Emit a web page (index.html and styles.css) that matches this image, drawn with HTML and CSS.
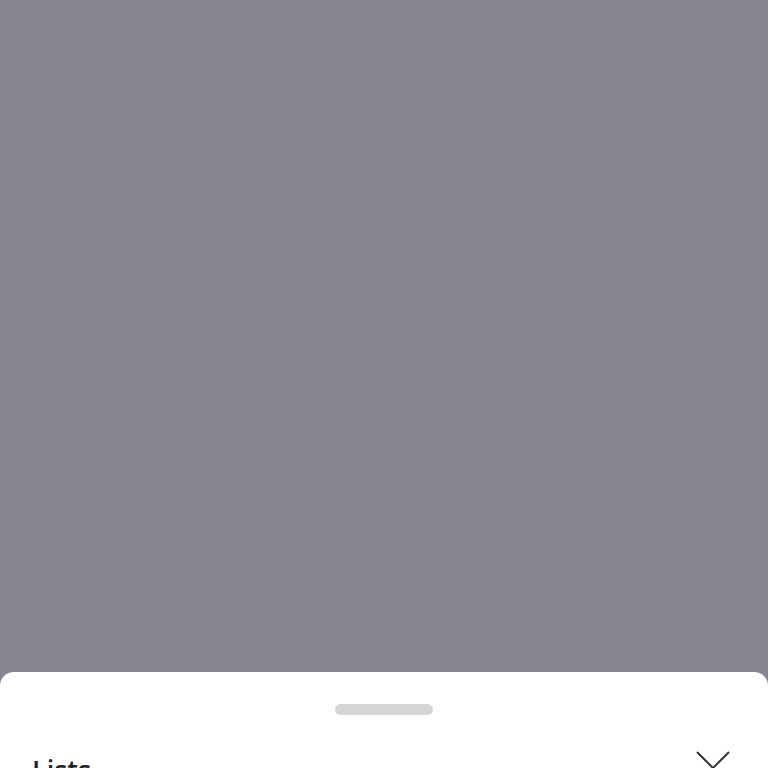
FILE: index.html
```html
<!DOCTYPE html>
<html>
<head>
<meta charset="utf-8">
<link rel="stylesheet" href="styles.css">
</head>
<body>
<div class="backdrop"></div>
<div class="sheet">
  <div class="handle"></div>
  <div class="header">
    <h2 class="title">Lists</h2>
    <button class="close" aria-label="Close">
      <svg width="34" height="34" viewBox="0 0 34 34"><path d="M1 1 L33 33 M33 1 L1 33" stroke="#333" stroke-width="2" fill="none"/></svg>
    </button>
  </div>
</div>
</body>
</html>
```
FILE: styles.css
```css
html, body { margin: 0; padding: 0; height: 100%; overflow: hidden; }
body {
  background: #85848f;
  font-family: "Open Sans", "Liberation Sans", sans-serif;
  display: flex;
  flex-direction: column;
}
.backdrop { height: 672px; flex: none; }
.sheet {
  flex: 1;
  background: #fff;
  border-radius: 14px 14px 0 0;
  display: flex;
  flex-direction: column;
  padding: 32px 32px 0 32px;
}
.handle {
  align-self: center;
  width: 98px;
  height: 11px;
  border-radius: 6px;
  background: #d6d6d6;
}
.header {
  display: flex;
  justify-content: space-between;
  align-items: flex-start;
  margin-top: 36px;
}
.title {
  margin: 0;
  font-size: 27px;
  font-weight: 600;
  color: #222;
  line-height: 32px;
  margin-top: 3px;
}
.close {
  border: 0;
  background: none;
  padding: 0;
  margin-right: 6px;
  width: 34px;
  height: 34px;
}
.close svg { display: block; }
```
